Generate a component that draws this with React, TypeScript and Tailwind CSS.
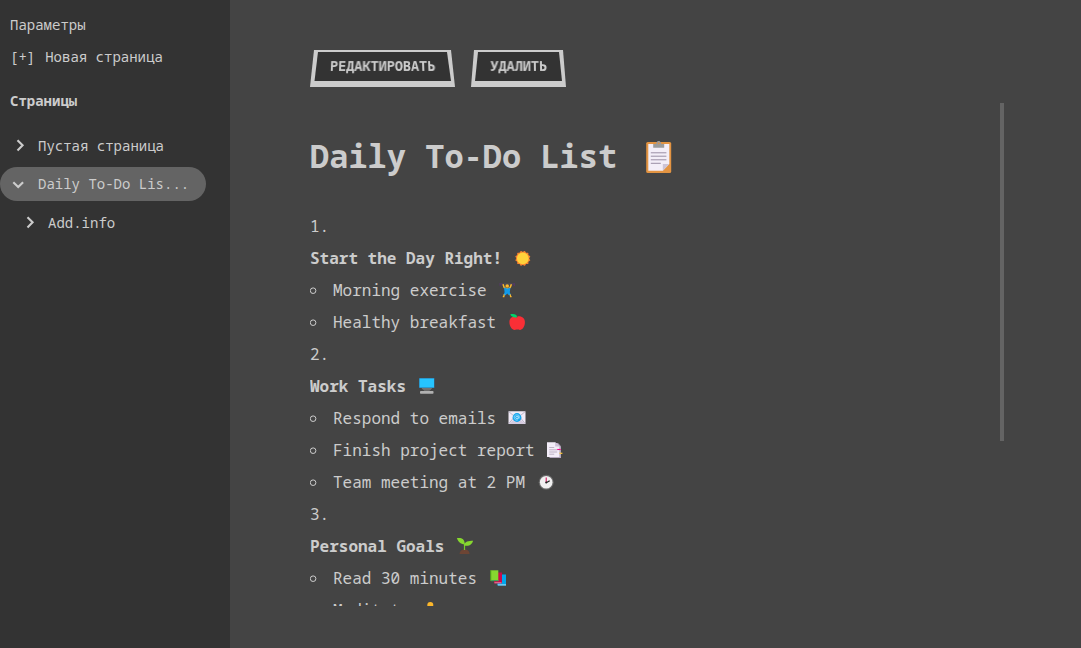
import type { ReactNode } from "react";

function Emoji({ children }: { children: ReactNode }) {
  return (
    <svg viewBox="0 0 22 22" className="ml-[9.6px] h-[22px] w-[22px] shrink-0">
      {children}
    </svg>
  );
}

const sun = (
  <Emoji>
    <g fill="#f8822f">
      <rect x="5.2" y="5.8" width="11.2" height="11.2" rx=".6" />
      <rect x="5.2" y="5.8" width="11.2" height="11.2" rx=".6" transform="rotate(30 10.8 11.4)" />
      <rect x="5.2" y="5.8" width="11.2" height="11.2" rx=".6" transform="rotate(60 10.8 11.4)" />
    </g>
    <circle cx="10.8" cy="11.4" r="5.900" fill="#ffd23b" />
  </Emoji>
);

const lifter = (
  <Emoji>
    <path d="M3.5 5h15.5" stroke="#5a5462" strokeWidth=".7" />
    <path d="M4 4v3M5.5 4v2.600M17 4v2.600M18.500 4v3" stroke="#533566" strokeWidth=".9" />
    <path d="M7 5.2l1.2 3.4 3 1.6 3-1.6 1.2-3.4" fill="none" stroke="#fcb72b" strokeWidth="1.5" />
    <circle cx="11.2" cy="7" r="1.8" fill="#fcb72b" />
    <path d="M8 8.600l3.200 1 3.200-1-.6 4.600 1.200 3h-2.200l-1.600-1.800-1.600 1.800H7.400l1.200-3z" fill="#129ae8" />
    <path d="M8.200 15.400l-.4 2.200H6.800M14.200 15.400l.4 2.200h1" fill="none" stroke="#fcb72b" strokeWidth="1.300" />
  </Emoji>
);

const apple = (
  <Emoji>
    <path d="M11 5.500C8.600 4.800 3.500 5.800 3.400 11c0 4.800 3 7.900 5 7.900 1.200 0 1.800-.3 2.800-.3s1.600.3 2.800.3c2.200 0 5-3.200 4.900-7.900-.1-5.200-5.300-6.200-7.900-5.500z" fill="#f92f36" />
    <path d="M4.300 3.300c3.200-.8 6.500-.4 7 2.900-3.500.7-5.700-.2-7-2.900z" fill="#00d26a" />
    <path d="M10.900 6.400l.9-1.600" stroke="#7d3d35" strokeWidth=".7" />
  </Emoji>
);

const monitor = (
  <Emoji>
    <rect x="3" y="3" width="15.500" height="10" rx=".5" fill="#2f6f9c" />
    <rect x="3.500" y="3.500" width="14.500" height="9" fill="#26c4ff" />
    <path d="M5.500 13.200h10.700l-2.700 2.300H8.200z" fill="#8b8b8b" />
    <path d="M7 14.300h7.500" stroke="#5c5c5c" strokeWidth=".7" />
    <rect x="4" y="16" width="13.500" height="2.700" rx=".8" fill="#b1b1b1" />
  </Emoji>
);

const mail = (
  <Emoji>
    <rect x="2.500" y="4.300" width="17" height="12.600" rx=".6" fill="#f0eaf6" />
    <path d="M2.600 16.800L8.300 10M19.300 16.800L13.800 10M2.600 4.500l5 4.200M19.300 4.500l-5 4.200" stroke="#b8b0c4" strokeWidth=".9" />
    <path d="M2.900 16.900L8.300 12l2.700 2 2.800-2 5.400 4.900z" fill="#d5cbdf" />
    <circle cx="11" cy="10.500" r="4.400" fill="#10a4ec" />
    <circle cx="11" cy="10.500" r="1.300" fill="none" stroke="#c9ecff" strokeWidth=".8" />
    <path d="M12.300 9.100v1.700c0 1.200 1.300 1 1.300-.4a2.700 2.700 0 1 0-1.500 2.500" fill="none" stroke="#c9ecff" strokeWidth=".6" />
  </Emoji>
);

const pages = (
  <Emoji>
    <path d="M5.500 4h8.500l3 3.300V19H5.500z" fill="#b4a8bd" />
    <path d="M3 3.300h8.200l4.200 4.200v10.500H3z" fill="#f3edf8" />
    <path d="M11.200 3.300l4.200 4.200h-4.200z" fill="#cdc1d7" />
    <path d="M5.200 8.500h5M5.200 10.800h8M5.200 13h8M5.200 15.200h5" stroke="#a79aaf" strokeWidth=".7" />
    <path d="M13.200 10.500h3.500" stroke="#f70a8d" strokeWidth="1.100" />
    <path d="M15.400 14.300h3" stroke="#ffc83d" strokeWidth="1.200" />
  </Emoji>
);

const clock = (
  <Emoji>
    <circle cx="11.200" cy="11.300" r="7.500" fill="#6a6a6a" />
    <circle cx="11.200" cy="11.300" r="6.300" fill="#f1f0f1" />
    <path d="M11.200 6.500v5.200" stroke="#d00050" strokeWidth="1" />
    <path d="M11.200 11.800l3.500-2" stroke="#222" strokeWidth="1.300" />
    <circle cx="11.200" cy="11.500" r="1" fill="#222" />
  </Emoji>
);

const seedling = (
  <Emoji>
    <path d="M5.600 19c0-2.500 2.300-4.700 5-4.700s5 2.200 5 4.700z" fill="#6d4534" />
    <path d="M10.500 15V8.500" stroke="#73c92d" strokeWidth="1.200" />
    <path d="M10.700 9.300C6 9.300 4.600 6.900 2.800 3.300c4.200-.7 7.900.3 7.900 6z" fill="#86d72f" />
    <path d="M10.200 10.700c.2-4.300 4.500-4.900 8.900-4.900-1 3.200-3 5.700-8.900 4.900z" fill="#86d72f" />
  </Emoji>
);

const books = (
  <Emoji>
    <path d="M10.500 7.500h8.500V18.500h-8.500z" fill="#00a6ed" />
    <path d="M10.500 17.200h8.500v1.300h-8z" fill="#8fd4f2" />
    <path d="M7 5.500h8V16.300H7z" fill="#ca0b4a" />
    <path d="M7.500 15.300h7v1h-7z" fill="#e58aa7" />
    <path d="M3.300 3.300h8V14h-8z" fill="#86d72f" />
    <path d="M3.300 3.300h.9V14h-.9z" fill="#44911b" />
    <path d="M4 13h7.500v1.200H4z" fill="#44a05a" />
  </Emoji>
);

const meditation = (
  <Emoji>
    <circle cx="11.300" cy="6" r="3" fill="#fcb72b" />
    <path d="M4 17c2-6 4-7.500 7.300-7.500S16.500 11 18.500 17z" fill="#8d65c5" />
  </Emoji>
);

const clipboard = (
  <svg viewBox="0 0 26 34" className="mt-px ml-[28.800px] h-[34px] w-[26px]">
    <rect x=".2" y="2" width="25" height="31" rx="1.500" fill="#e39442" />
    <path d="M2.300 4h21v20l-6.500 6.700H2.300z" fill="#f3eef8" />
    <path d="M16.800 30.700V24h6.500z" fill="#cdc4d6" />
    <path d="M7.200 4h3a2.500 2.500 0 0 1 5 0h3v3.800h-11z" fill="#9b9b9b" />
    <path d="M11.300 2.600a1.500 1.500 0 0 1 2.800 0" fill="none" stroke="#9b9b9b" strokeWidth="1.200" />
    <circle cx="12.700" cy="3.300" r=".9" fill="#e39442" />
    <path d="M4.800 12.800h15.600M4.800 16.200h15.600M4.800 19.800h15.600M4.800 23.300h10" stroke="#998ea4" strokeWidth="1" />
  </svg>
);

function Chevron({ down = false }: { down?: boolean }) {
  return (
    <svg viewBox="0 0 14 14" className="h-3.5 w-3.5 shrink-0" fill="none" stroke="#cccccc" strokeWidth="2.100">
      {down ? <path d="M2.300 5.200l4.900 4.900 4.900-4.900" /> : <path d="M4.500 1.200l5.100 5.100-5.100 5.100" />}
    </svg>
  );
}

function Heading({ n, text, emoji }: { n: number; text: string; emoji: ReactNode }) {
  return (
    <>
      <div className="h-8">{n}.</div>
      <div className="flex h-8 items-center font-bold">
        {text}
        {emoji}
      </div>
    </>
  );
}

function Item({ text, emoji }: { text: string; emoji: ReactNode }) {
  return (
    <li className="flex h-8 items-center">
      <svg viewBox="0 0 8 8" className="mr-[15px] h-2 w-2 shrink-0" fill="none" stroke="#cccccc">
        <circle cx="3.100" cy="4.700" r="2.800" />
      </svg>
      {text}
      {emoji}
    </li>
  );
}

export default function App() {
  return (
    <div className="flex h-[648px] w-[1081px] overflow-hidden bg-[#444444] font-['Noto_Sans_Mono',monospace] text-[#cccccc]">
      <aside className="flex w-[230px] shrink-0 flex-col bg-[#333333] pt-[9px] text-sm leading-8">
        <div className="pl-2.5">Параметры</div>
        <div className="flex gap-2.5 pl-2.5">
          <span>[+]</span>
          <span>Новая страница</span>
        </div>
        <div className="mt-3 pl-2.5 font-bold">Страницы</div>
        <nav className="mt-3 flex flex-col">
          <div className="flex h-[34px] items-center gap-[11px] pl-[13px]">
            <Chevron />
            <span>Пустая страница</span>
          </div>
          <div className="mt-1 flex h-[34px] w-[206px] items-center gap-[13px] rounded-full bg-[#646464] pl-[11px]">
            <Chevron down />
            <span>Daily To-Do Lis...</span>
          </div>
          <div className="mt-[5px] flex h-[34px] items-center gap-[11px] pl-[23px]">
            <Chevron />
            <span>Add.info</span>
          </div>
        </nav>
      </aside>
      <main className="flex flex-1 flex-col pt-[50px] pl-20">
        <div className="flex h-[53px] gap-4 text-[13.333px] leading-4 font-bold">
          <button className="grid h-[37px] w-[145px] bg-[#cccccc] [clip-path:polygon(4px_0,141px_0,145px_37px,0_37px)]">
            <span className="grid place-items-center bg-[#333333] pb-[5px] [clip-path:polygon(8px_2px,137px_2px,141px_31px,4.500px_31px)]">
              <span className="[transform:perspective(200px)_translateX(-0.3px)_rotateX(10deg)_scaleX(1.012)]">РЕДАКТИРОВАТЬ</span>
            </span>
          </button>
          <button className="grid h-[37px] w-[95px] bg-[#cccccc] [clip-path:polygon(3px_0,92px_0,95px_37px,0_37px)]">
            <span className="grid place-items-center bg-[#333333] pb-[5px] [clip-path:polygon(7px_2px,88px_2px,91px_31px,4px_31px)]">
              <span className="[transform:perspective(200px)_translateX(-0.3px)_rotateX(10deg)_scaleX(1.012)]">УДАЛИТЬ</span>
            </span>
          </button>
        </div>
        <div className="flex h-[503px] w-[694px] justify-between overflow-hidden">
          <article className="pt-[29px] leading-8">
            <h1 className="flex h-12 items-center text-[32px] leading-[48px] font-bold">
              Daily To-Do List
              {clipboard}
            </h1>
            <ul className="mt-[30px]">
              <Heading n={1} text="Start the Day Right!" emoji={sun} />
              <Item text="Morning exercise" emoji={lifter} />
              <Item text="Healthy breakfast" emoji={apple} />
              <Heading n={2} text="Work Tasks" emoji={monitor} />
              <Item text="Respond to emails" emoji={mail} />
              <Item text="Finish project report" emoji={pages} />
              <Item text="Team meeting at 2 PM" emoji={clock} />
              <Heading n={3} text="Personal Goals" emoji={seedling} />
              <Item text="Read 30 minutes" emoji={books} />
              <Item text="Meditate" emoji={meditation} />
            </ul>
          </article>
          <div className="h-[338px] w-1 bg-[#646464]" />
        </div>
      </main>
    </div>
  );
}
